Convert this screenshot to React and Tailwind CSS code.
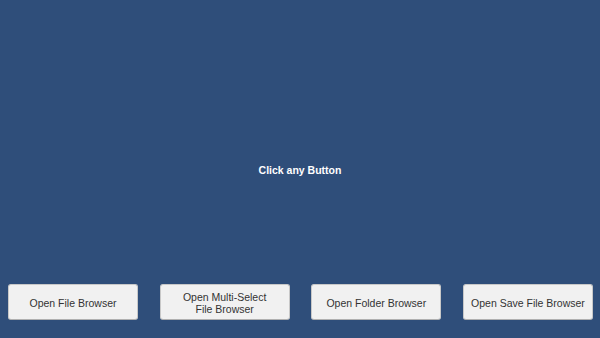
export default function App() {
  const labels = [
    ["Open File Browser"],
    ["Open Multi-Select", "File Browser"],
    ["Open Folder Browser"],
    ["Open Save File Browser"],
  ];
  return (
    <div className="w-[600px] h-[338px] bg-[#2f4e7a] flex flex-col font-['Liberation_Sans',Arial,sans-serif]">
      <div className="h-[54px]" />
      <div className="flex-1 flex items-center justify-center pt-[3px]">
        <span className="text-white font-bold text-[10.5px] leading-none">Click any Button</span>
      </div>
      <div className="h-[54px] flex justify-between pl-2 pr-[7px]">
        {labels.map((l, i) => (
          <button
            key={i}
            className="w-[130px] h-[36px] rounded-[3px] bg-[#f1f1f1] border border-[#c8c8c8] border-b-[#b0b0b0] text-[#333333] text-[10.5px] leading-[12px] whitespace-nowrap flex flex-col items-center justify-center pt-[2px]"
          >
            {l.map((t, j) => (
              <span key={j}>{t}</span>
            ))}
          </button>
        ))}
      </div>
    </div>
  );
}
